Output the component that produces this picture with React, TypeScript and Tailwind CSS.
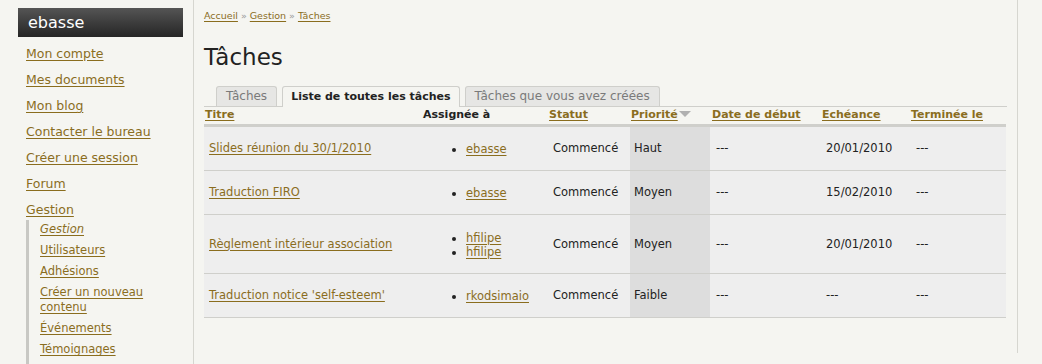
import React from 'react';

type Task = {
  title: string;
  assignees: string[];
  status: string;
  priority: string;
  start: string;
  due: string;
  done: string;
  height: string;
};

const tasks: Task[] = [
  { title: 'Slides réunion du 30/1/2010', assignees: ['ebasse'], status: 'Commencé', priority: 'Haut', start: '---', due: '20/01/2010', done: '---', height: 'h-[45px]' },
  { title: 'Traduction FIRO', assignees: ['ebasse'], status: 'Commencé', priority: 'Moyen', start: '---', due: '15/02/2010', done: '---', height: 'h-[44px]' },
  { title: 'Règlement intérieur association', assignees: ['hfilipe', 'hfilipe'], status: 'Commencé', priority: 'Moyen', start: '---', due: '20/01/2010', done: '---', height: 'h-[59px]' },
  { title: "Traduction notice 'self-esteem'", assignees: ['rkodsimaio'], status: 'Commencé', priority: 'Faible', start: '---', due: '---', done: '---', height: 'h-[44px]' },
];

const menu = ['Mon compte', 'Mes documents', 'Mon blog', 'Contacter le bureau', 'Créer une session', 'Forum', 'Gestion'];
const submenu = ['Utilisateurs', 'Adhésions', 'Créer un nouveau contenu', 'Événements', 'Témoignages'];

const link = 'text-[#8a6d1e] underline underline-offset-2';

function Sidebar() {
  return (
    <div className="w-[194px] shrink-0 border-r border-[#d6d6d0] pl-[18px] pt-2 pr-[10px] h-[364px]">
      <div className="h-[29px] w-[165px] bg-gradient-to-b from-[#555555] to-[#262626] pl-[10px] text-[16px] leading-[29px] text-white">
        ebasse
      </div>
      <ul className="mt-[4px] pl-2 text-[12.5px]">
        {menu.map((m) => (
          <li key={m} className="h-[26px] leading-[26px]">
            <a className={link} href="#">{m}</a>
          </li>
        ))}
      </ul>
      <ul className="ml-[8px] mt-[-3px] border-l-[3px] border-[#c8c8c4] pl-[11px] text-[11.5px] h-[200px]">
        <li className="h-[20px] leading-[18px]">
          <a className={link + ' italic'} href="#">Gestion</a>
        </li>
        {submenu.map((s) => (
          <li key={s} className="w-[130px] leading-[15px] py-[3px]">
            <a className={link} href="#">{s}</a>
          </li>
        ))}
      </ul>
    </div>
  );
}

function Tabs() {
  return (
    <div className="flex items-end gap-[5px] border-b border-[#cfcfcb] pl-3 h-[21px] text-[12px]">
      <div className="h-[20px] rounded-t-[3px] border border-b-0 border-[#cfcfcb] bg-[#e6e6e4] px-[9px] leading-[19px] text-[#7a7a7a]">Tâches</div>
      <div className="h-[21px] -mb-px rounded-t-[3px] border border-b-0 border-[#cfcfcb] bg-[#f5f5f1] px-[8px] leading-[20px] text-[11px] font-bold text-[#222]">Liste de toutes les tâches</div>
      <div className="h-[20px] rounded-t-[3px] border border-b-0 border-[#cfcfcb] bg-[#e6e6e4] px-[9px] leading-[19px] text-[#7a7a7a]">Tâches que vous avez créées</div>
    </div>
  );
}

export default function App() {
  return (
    <div className="flex w-[1042px] h-[364px] overflow-hidden bg-[#f5f5f1] text-[#222]" style={{ fontFamily: '"DejaVu Sans", Verdana, sans-serif' }}>
      <Sidebar />
      <div className="w-[824px] shrink-0 border-r border-[#d6d6d0] pl-[10px] pr-[10px] h-[353px]">
        <div className="pt-[10px] text-[9.5px] leading-[12px]">
          <a className={link} href="#">Accueil</a>
          <span className="mx-[3px] text-[#999]">»</span>
          <a className={link} href="#">Gestion</a>
          <span className="mx-[3px] text-[#999]">»</span>
          <a className={link} href="#">Tâches</a>
        </div>
        <h1 className="mt-[21px] text-[23px] leading-[28px] font-normal text-[#222]">Tâches</h1>
        <div className="mt-[15px]">
          <Tabs />
        </div>
        <table className="w-[802px] table-fixed border-collapse text-[11.5px]">
          <colgroup>
            <col className="w-[216px]" />
            <col className="w-[128px]" />
            <col className="w-[82px]" />
            <col className="w-[80px]" />
            <col className="w-[110px]" />
            <col className="w-[89px]" />
            <col className="w-[97px]" />
          </colgroup>
          <thead>
            <tr className="h-[18px] border-b-[3px] border-[#cfcfcb] text-left text-[11px]">
              <th className="pl-[1px] font-bold"><a className={link} href="#">Titre</a></th>
              <th className="pl-[3px] font-bold">Assignée à</th>
              <th className="pl-[1px] font-bold"><a className={link} href="#">Statut</a></th>
              <th className="pl-[1px] font-bold">
                <a className={link} href="#">
                  Priorité<span className="inline-block align-middle ml-[1px] mb-[2px] h-0 w-0 border-l-[6px] border-r-[6px] border-t-[6px] border-l-transparent border-r-transparent border-t-[#b0b0b0]" />
                </a>
              </th>
              <th className="pl-[2px] font-bold"><a className={link} href="#">Date de début</a></th>
              <th className="pl-[2px] font-bold"><a className={link} href="#">Echéance</a></th>
              <th className="pl-[2px] font-bold"><a className={link} href="#">Terminée le</a></th>
            </tr>
          </thead>
          <tbody>
            {tasks.map((t) => (
              <tr key={t.title} className={`${t.height} border-b border-[#cfcfcb] bg-[#eeeeee]`}>
                <td className="pl-[5px] pt-[2px]"><a className={link} href="#">{t.title}</a></td>
                <td className="pl-[33px] pt-[2px]">
                  <ul className="list-disc pl-[13px] leading-[14px]">
                    {t.assignees.map((a, i) => (
                      <li key={i}><a className={link} href="#">{a}</a></li>
                    ))}
                  </ul>
                </td>
                <td className="pl-[5px] pt-[2px]">{t.status}</td>
                <td className="pl-[4px] pt-[2px] bg-[#dddddd]">{t.priority}</td>
                <td className="pl-[6px] pt-[2px]">{t.start}</td>
                <td className="pl-[6px] pt-[2px]">{t.due}</td>
                <td className="pl-[7px] pt-[2px]">{t.done}</td>
              </tr>
            ))}
          </tbody>
        </table>
      </div>
    </div>
  );
}
